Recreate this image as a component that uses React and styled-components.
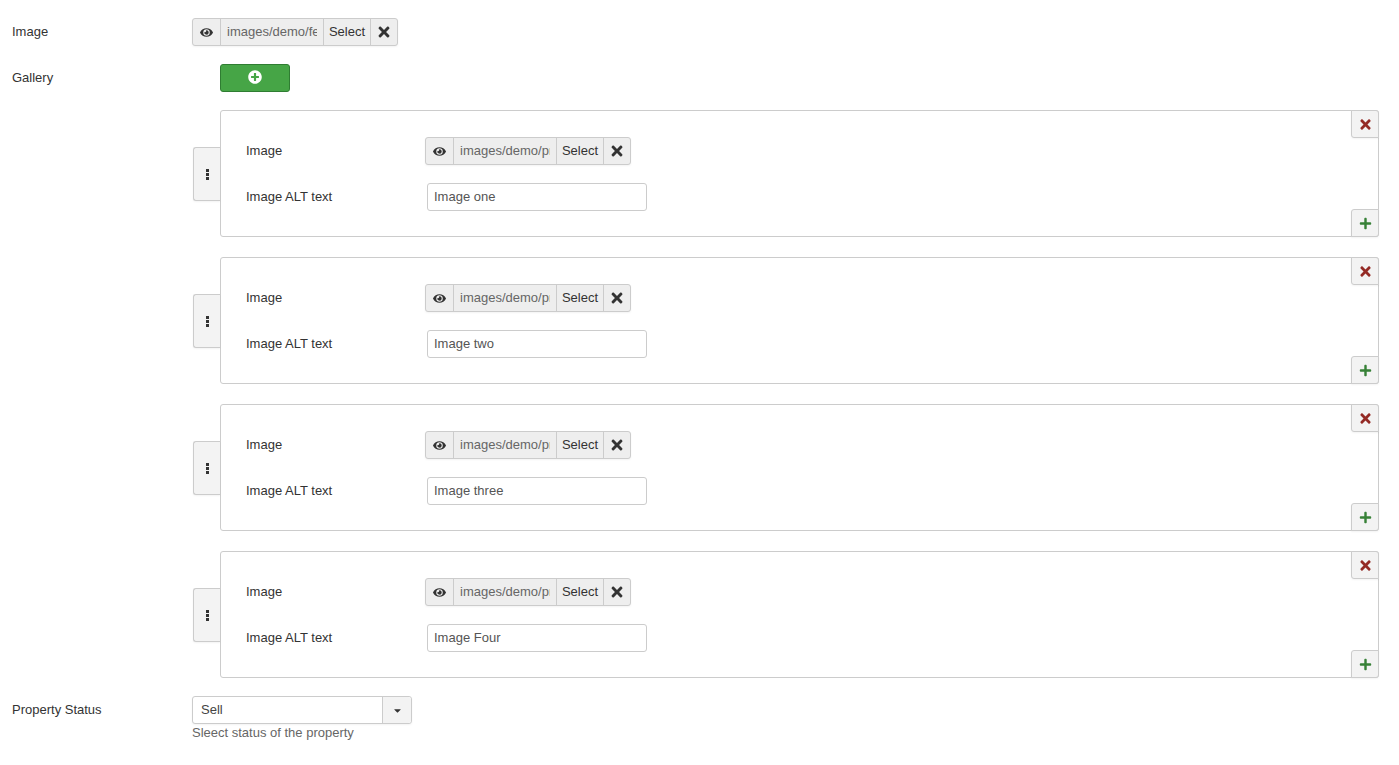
import React from "react";
import styled, { createGlobalStyle } from "styled-components";
import { FaEye, FaTimes, FaPlus, FaPlusCircle, FaCaretDown } from "react-icons/fa";

const Global = createGlobalStyle`
  html, body { margin: 0; padding: 0; background: #fff; }
  body { font-family: "Liberation Sans", Arial, sans-serif; font-size: 13px; line-height: 18px; color: #333; }
`;

const Page = styled.div`
  padding: 18px 20px 0 12px;
  height: 765px;
  box-sizing: border-box;
  overflow: hidden;
`;

const Row = styled.div`
  display: grid;
  grid-template-columns: ${(p) => p.$labelWidth || 180}px 1fr;
  align-items: start;
  margin-bottom: 18px;
`;

const Label = styled.div`
  line-height: 28px;
  color: #333;
  white-space: nowrap;
`;

const MediaGroup = styled.div`
  display: inline-flex;
  height: 28px;
  box-sizing: border-box;
  border: 1px solid #ccc;
  border-radius: 3px;
  background: #eee;
  box-shadow: 0 1px 2px rgba(0, 0, 0, 0.05);
  width: max-content;
  margin-left: ${(p) => p.$offset || 0}px;
`;

const MediaCell = styled.div`
  display: flex;
  align-items: center;
  justify-content: center;
  box-sizing: border-box;
  width: ${(p) => p.$w}px;
  height: 26px;
  border-left: ${(p) => (p.$first ? "0" : "1px solid #ccc")};
  color: ${(p) => p.$color || "#333"};
  font-size: 13px;
  overflow: hidden;
  white-space: nowrap;
`;

const PathText = styled.div`
  box-sizing: border-box;
  width: 103px;
  height: 26px;
  border-left: 1px solid #ccc;
  padding: 0 6px;
  line-height: 26px;
  color: #666;
  display: flex;
`;

const PathClip = styled.span`
  display: block;
  width: 100%;
  overflow: hidden;
  white-space: nowrap;
`;

const GreenButton = styled.button`
  display: flex;
  align-items: center;
  justify-content: center;
  width: 70px;
  height: 28px;
  margin-left: 28px;
  padding: 0 0 2px;
  box-sizing: border-box;
  background: #46a546;
  border: 1px solid #2f7d32;
  border-radius: 3px;
  color: #fff;
  font-size: 13px;
`;

const PanelList = styled.div`
  display: flex;
  flex-direction: column;
  gap: 20px;
  margin: 2px 0 18px 208px;
`;

const Panel = styled.div`
  position: relative;
  box-sizing: border-box;
  height: 127px;
  padding: 26px 25px 0;
  border: 1px solid #ccc;
  border-radius: 3px;
  background: #fff;
`;

const Handle = styled.div`
  position: absolute;
  left: -28px;
  top: 36px;
  width: 27px;
  height: 54px;
  box-sizing: border-box;
  display: flex;
  align-items: center;
  justify-content: center;
  background: #f3f3f3;
  border: 1px solid #ccc;
  border-right: 0;
  border-radius: 3px 0 0 3px;
  box-shadow: 0 1px 2px rgba(0, 0, 0, 0.05);
`;

const Dots = styled.span`
  display: flex;
  flex-direction: column;
  gap: 1px;
  & > i {
    display: block;
    width: 3px;
    height: 3px;
    background: #333;
  }
`;

const Corner = styled.button`
  position: absolute;
  right: -1px;
  ${(p) => (p.$bottom ? "bottom: -1px; border-radius: 3px 0 3px 0;" : "top: -1px; border-radius: 0 3px 0 3px;")}
  width: 28px;
  height: 28px;
  padding: 0;
  box-sizing: border-box;
  display: flex;
  align-items: center;
  justify-content: center;
  background: #f3f3f3;
  border: 1px solid #ccc;
  color: ${(p) => (p.$bottom ? "#378137" : "#942a25")};
  box-shadow: 0 1px 2px rgba(0, 0, 0, 0.05);
`;

const TextInput = styled.div`
  box-sizing: border-box;
  width: 220px;
  height: 28px;
  margin-left: 1px;
  padding: 0 6px;
  line-height: 26px;
  border: 1px solid #ccc;
  border-radius: 3px;
  background: #fff;
  color: #555;
`;

const SelectBox = styled.div`
  display: flex;
  box-sizing: border-box;
  width: 220px;
  height: 28px;
  border: 1px solid #ccc;
  border-radius: 3px;
  background: #fff;
  box-shadow: 0 1px 2px rgba(0, 0, 0, 0.05);
`;

const SelectValue = styled.div`
  flex: 1;
  padding-left: 8px;
  line-height: 26px;
  color: #444;
`;

const SelectArrow = styled.div`
  width: 28px;
  display: flex;
  align-items: center;
  justify-content: center;
  border-left: 1px solid #ccc;
  background: #f3f3f3;
  border-radius: 0 3px 3px 0;
  color: #333;
`;

const Help = styled.div`
  color: #666;
  line-height: 16px;
  margin-top: 1px;
`;

const Media = ({ path, offset }) => (
  <MediaGroup $offset={offset}>
    <MediaCell $w={27} $first>
      <FaEye size={13} />
    </MediaCell>
    <PathText>
      <PathClip>{path}</PathClip>
    </PathText>
    <MediaCell $w={47}>Select</MediaCell>
    <MediaCell $w={27}>
      <FaTimes size={16} />
    </MediaCell>
  </MediaGroup>
);

const InnerRow = styled(Row)`
  margin-bottom: 18px;
`;

const images = ["Image one", "Image two", "Image three", "Image Four"];

export default function App() {
  return (
    <Page>
      <Global />
      <Row>
        <Label>Image</Label>
        <Media path="images/demo/featured.jpg" />
      </Row>
      <Row>
        <Label>Gallery</Label>
        <GreenButton aria-label="Add">
          <FaPlusCircle size={14} />
        </GreenButton>
      </Row>
      <PanelList>
        {images.map((alt) => (
          <Panel key={alt}>
            <Handle>
              <Dots>
                <i />
                <i />
                <i />
              </Dots>
            </Handle>
            <Corner aria-label="Remove">
              <FaTimes size={15} />
            </Corner>
            <Corner $bottom aria-label="Add">
              <FaPlus size={13} />
            </Corner>
            <InnerRow>
              <Label>Image</Label>
              <Media path="images/demo/property.jpg" offset={-1} />
            </InnerRow>
            <InnerRow>
              <Label>Image ALT text</Label>
              <TextInput>{alt}</TextInput>
            </InnerRow>
          </Panel>
        ))}
      </PanelList>
      <Row>
        <Label>Property Status</Label>
        <div>
          <SelectBox>
            <SelectValue>Sell</SelectValue>
            <SelectArrow>
              <FaCaretDown size={11} />
            </SelectArrow>
          </SelectBox>
          <Help>Sleect status of the property</Help>
        </div>
      </Row>
    </Page>
  );
}
